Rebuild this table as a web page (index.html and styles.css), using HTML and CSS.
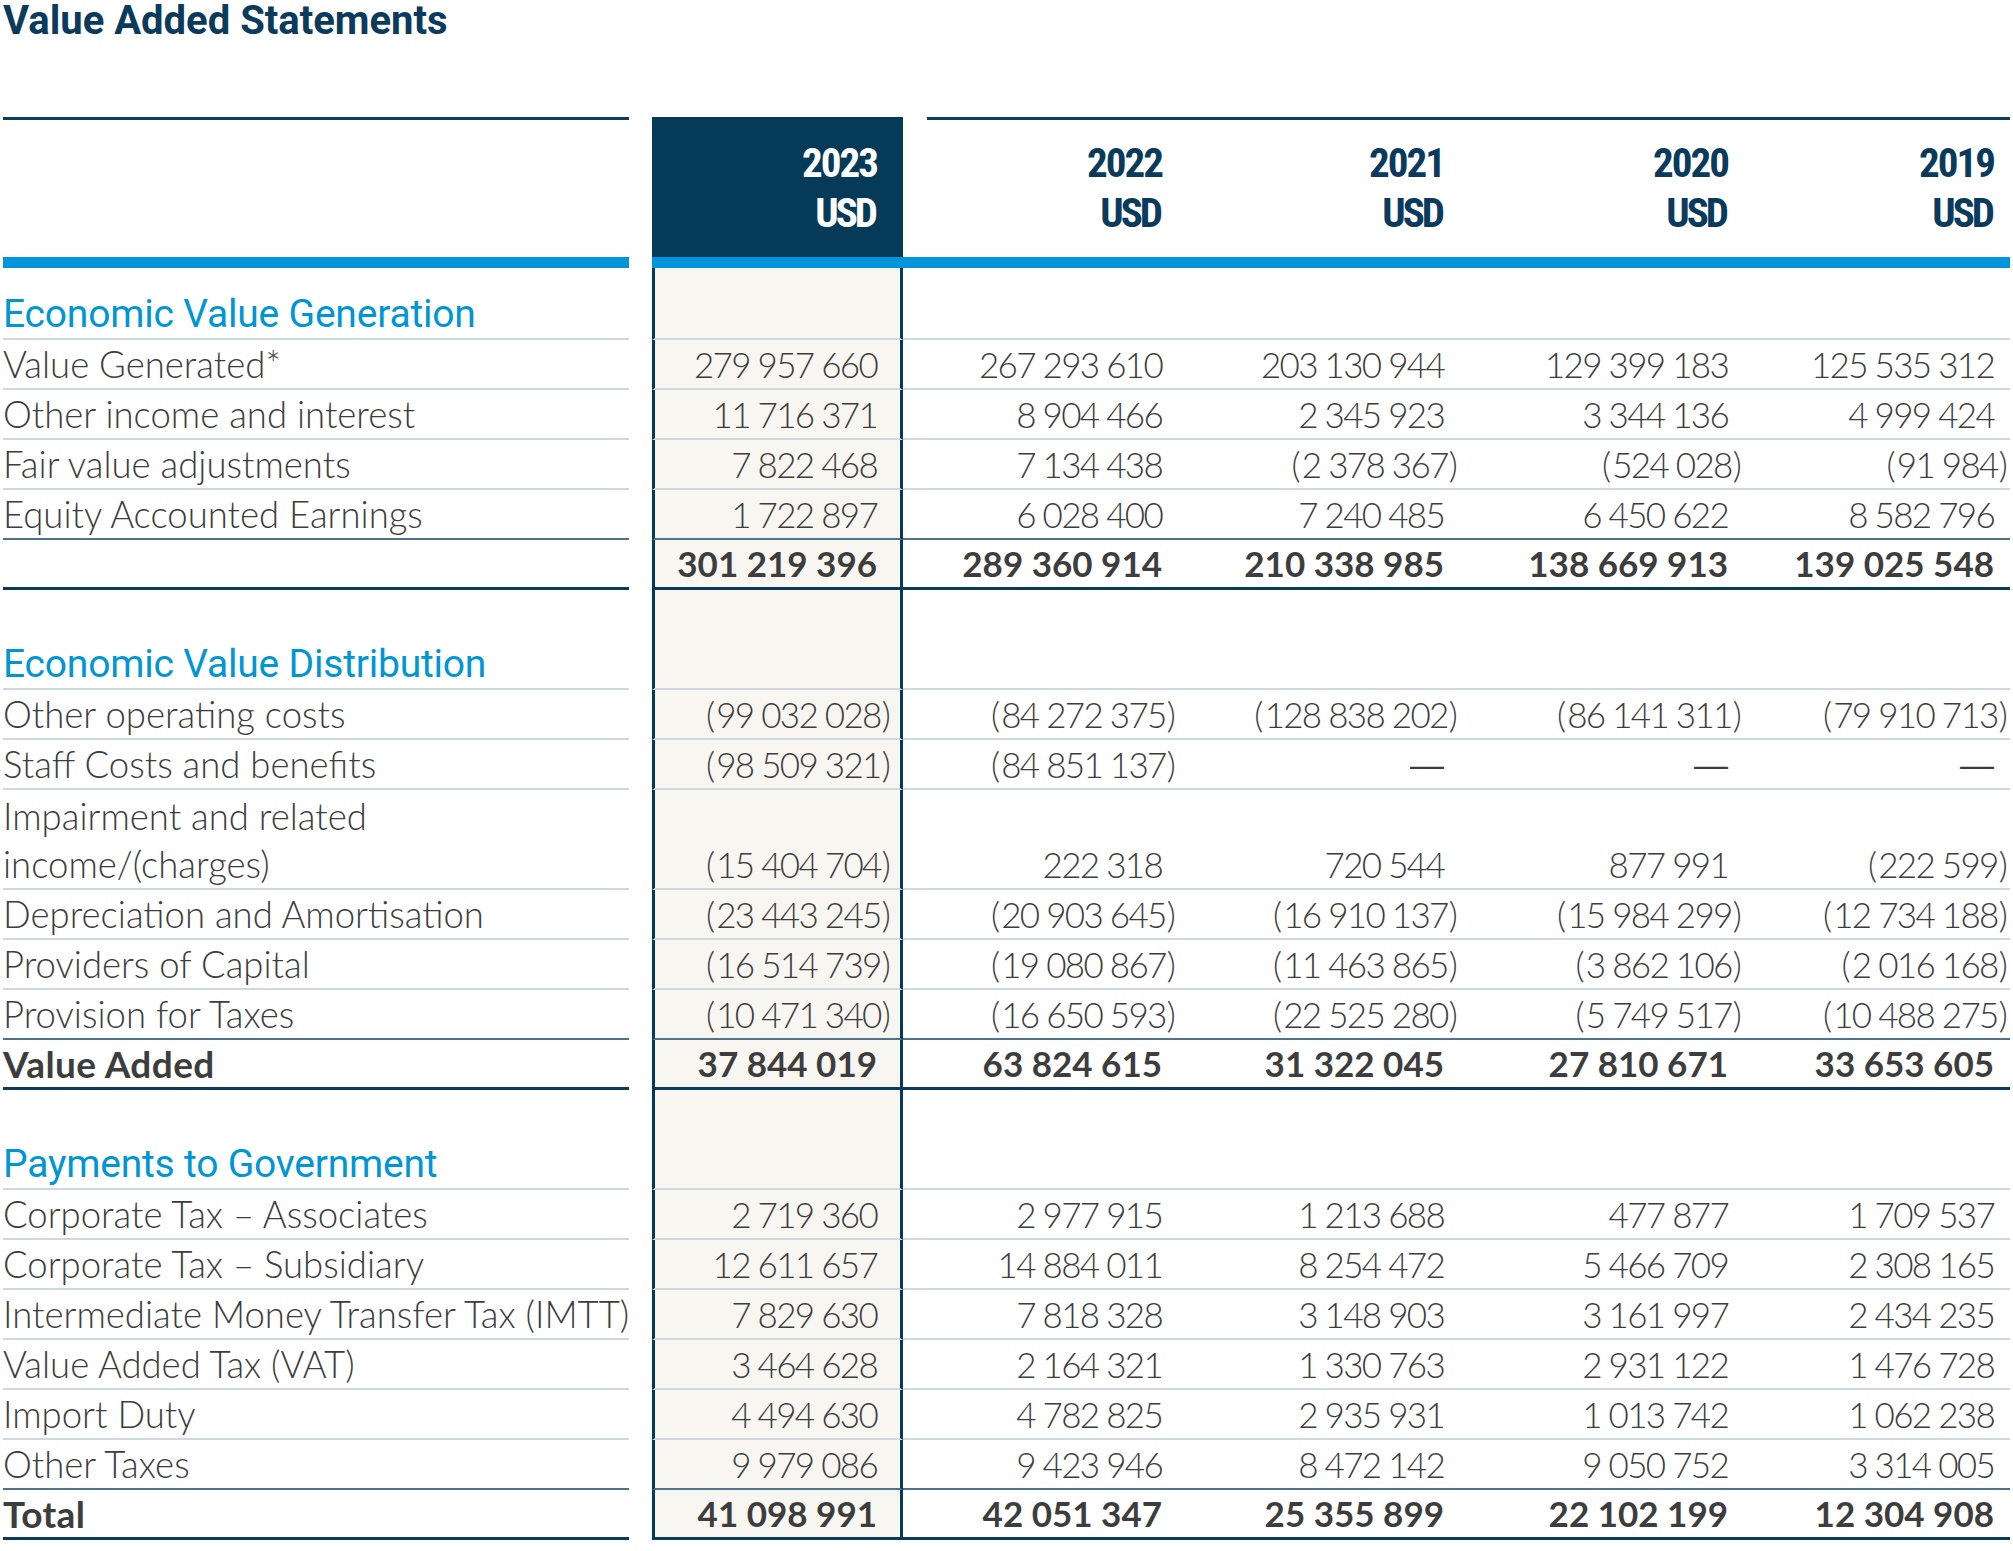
FILE: index.html
```html
<!DOCTYPE html>
<html lang="en">
<head>
<meta charset="utf-8">
<title>Value Added Statements</title>
<link rel="stylesheet" href="styles.css">
</head>
<body>
<h1 class="title">Value Added Statements</h1>

<div class="grid hdr">
  <div class="hlab"></div>
  <div class="h23">2023<br><span class="cur">USD</span></div>
  <div class="years">
    <div>2022<br><span class="cur">USD</span></div>
    <div>2021<br><span class="cur">USD</span></div>
    <div>2020<br><span class="cur">USD</span></div>
    <div>2019<br><span class="cur">USD</span></div>
  </div>
</div>
<div class="grid bar"><div class="b1"></div><div class="b2"></div></div>

<div class="grid row h1"><div class="c sec">Economic Value Generation</div><div class="c y23"></div><div class="c"></div><div class="c"></div><div class="c"></div><div class="c"></div></div>
<div class="grid row"><div class="c lab">Value Generated*</div><div class="c num y23">279 957 660</div><div class="c num">267 293 610</div><div class="c num">203 130 944</div><div class="c num">129 399 183</div><div class="c num last">125 535 312</div></div>
<div class="grid row"><div class="c lab">Other income and interest</div><div class="c num y23">11 716 371</div><div class="c num">8 904 466</div><div class="c num">2 345 923</div><div class="c num">3 344 136</div><div class="c num last">4 999 424</div></div>
<div class="grid row"><div class="c lab">Fair value adjustments</div><div class="c num y23">7 822 468</div><div class="c num">7 134 438</div><div class="c num"><span class="op">(</span>2 378 367<span class="cp">)</span></div><div class="c num"><span class="op">(</span>524 028<span class="cp">)</span></div><div class="c num last"><span class="op">(</span>91 984<span class="cp">)</span></div></div>
<div class="grid row pre"><div class="c lab">Equity Accounted Earnings</div><div class="c num y23">1 722 897</div><div class="c num">6 028 400</div><div class="c num">7 240 485</div><div class="c num">6 450 622</div><div class="c num last">8 582 796</div></div>
<div class="grid row tot"><div class="c lab"></div><div class="c num y23">301 219 396</div><div class="c num">289 360 914</div><div class="c num">210 338 985</div><div class="c num">138 669 913</div><div class="c num last">139 025 548</div></div>

<div class="grid row h2"><div class="c sec">Economic Value Distribution</div><div class="c y23"></div><div class="c"></div><div class="c"></div><div class="c"></div><div class="c"></div></div>
<div class="grid row"><div class="c lab">Other operating costs</div><div class="c num y23"><span class="op">(</span>99 032 028<span class="cp">)</span></div><div class="c num"><span class="op">(</span>84 272 375<span class="cp">)</span></div><div class="c num"><span class="op">(</span>128 838 202<span class="cp">)</span></div><div class="c num"><span class="op">(</span>86 141 311<span class="cp">)</span></div><div class="c num last"><span class="op">(</span>79 910 713<span class="cp">)</span></div></div>
<div class="grid row"><div class="c lab">Staff Costs and benefits</div><div class="c num y23"><span class="op">(</span>98 509 321<span class="cp">)</span></div><div class="c num"><span class="op">(</span>84 851 137<span class="cp">)</span></div><div class="c num"><span class="dash">—</span></div><div class="c num"><span class="dash">—</span></div><div class="c num last"><span class="dash">—</span></div></div>
<div class="grid row two"><div class="c lab">Impairment and related<br>income/(charges)</div><div class="c num y23"><span class="op">(</span>15 404 704<span class="cp">)</span></div><div class="c num">222 318</div><div class="c num">720 544</div><div class="c num">877 991</div><div class="c num last"><span class="op">(</span>222 599<span class="cp">)</span></div></div>
<div class="grid row"><div class="c lab">Depreciation and Amortisation</div><div class="c num y23"><span class="op">(</span>23 443 245<span class="cp">)</span></div><div class="c num"><span class="op">(</span>20 903 645<span class="cp">)</span></div><div class="c num"><span class="op">(</span>16 910 137<span class="cp">)</span></div><div class="c num"><span class="op">(</span>15 984 299<span class="cp">)</span></div><div class="c num last"><span class="op">(</span>12 734 188<span class="cp">)</span></div></div>
<div class="grid row"><div class="c lab">Providers of Capital</div><div class="c num y23"><span class="op">(</span>16 514 739<span class="cp">)</span></div><div class="c num"><span class="op">(</span>19 080 867<span class="cp">)</span></div><div class="c num"><span class="op">(</span>11 463 865<span class="cp">)</span></div><div class="c num"><span class="op">(</span>3 862 106<span class="cp">)</span></div><div class="c num last"><span class="op">(</span>2 016 168<span class="cp">)</span></div></div>
<div class="grid row pre"><div class="c lab">Provision for Taxes</div><div class="c num y23"><span class="op">(</span>10 471 340<span class="cp">)</span></div><div class="c num"><span class="op">(</span>16 650 593<span class="cp">)</span></div><div class="c num"><span class="op">(</span>22 525 280<span class="cp">)</span></div><div class="c num"><span class="op">(</span>5 749 517<span class="cp">)</span></div><div class="c num last"><span class="op">(</span>10 488 275<span class="cp">)</span></div></div>
<div class="grid row tot"><div class="c lab">Value Added</div><div class="c num y23">37 844 019</div><div class="c num">63 824 615</div><div class="c num">31 322 045</div><div class="c num">27 810 671</div><div class="c num last">33 653 605</div></div>

<div class="grid row h2"><div class="c sec">Payments to Government</div><div class="c y23"></div><div class="c"></div><div class="c"></div><div class="c"></div><div class="c"></div></div>
<div class="grid row"><div class="c lab">Corporate Tax – Associates</div><div class="c num y23">2 719 360</div><div class="c num">2 977 915</div><div class="c num">1 213 688</div><div class="c num">477 877</div><div class="c num last">1 709 537</div></div>
<div class="grid row"><div class="c lab">Corporate Tax – Subsidiary</div><div class="c num y23">12 611 657</div><div class="c num">14 884 011</div><div class="c num">8 254 472</div><div class="c num">5 466 709</div><div class="c num last">2 308 165</div></div>
<div class="grid row"><div class="c lab">Intermediate Money Transfer Tax (IMTT)</div><div class="c num y23">7 829 630</div><div class="c num">7 818 328</div><div class="c num">3 148 903</div><div class="c num">3 161 997</div><div class="c num last">2 434 235</div></div>
<div class="grid row"><div class="c lab">Value Added Tax (VAT)</div><div class="c num y23">3 464 628</div><div class="c num">2 164 321</div><div class="c num">1 330 763</div><div class="c num">2 931 122</div><div class="c num last">1 476 728</div></div>
<div class="grid row"><div class="c lab">Import Duty</div><div class="c num y23">4 494 630</div><div class="c num">4 782 825</div><div class="c num">2 935 931</div><div class="c num">1 013 742</div><div class="c num last">1 062 238</div></div>
<div class="grid row pre"><div class="c lab">Other Taxes</div><div class="c num y23">9 979 086</div><div class="c num">9 423 946</div><div class="c num">8 472 142</div><div class="c num">9 050 752</div><div class="c num last">3 314 005</div></div>
<div class="grid row tot"><div class="c lab">Total</div><div class="c num y23">41 098 991</div><div class="c num">42 051 347</div><div class="c num">25 355 899</div><div class="c num">22 102 199</div><div class="c num last">12 304 908</div></div>
</body>
</html>
```

FILE: styles.css
```css
* { box-sizing: border-box; }
html, body { margin: 0; background: #ffffff; }
body {
  padding: 0 0 0 3px;
  font-family: "Lato", "Open Sans", sans-serif;
  color: #3d3d3d;
}

.title {
  margin: 0 0 76px;
  padding-top: 1px;
  height: 41px;
  font: 700 40px/40px "Roboto", "Liberation Sans", sans-serif;
  color: #0a3a5c;
  letter-spacing: 0;
}

.grid {
  display: grid;
  grid-template-columns: 626px 23px 251px 285px 282px 284px 256px;
}

/* header */
.hdr { height: 140px; }
.hlab { border-top: 3px solid #0f3d5e; }
.h23 {
  grid-column: 3;
  background: #053a59;
  color: #ffffff;
  text-align: right;
  padding: 21px 26px 0 0;
  font: 700 41px/50px "Liberation Sans Narrow", "Roboto Condensed", "Roboto", sans-serif;
  letter-spacing: -2px;
}
.years {
  grid-column: 4 / span 4;
  margin-left: 24px;
  border-top: 3px solid #0f3d5e;
  display: grid;
  grid-template-columns: 261px 282px 284px 256px;
}
.years > div {
  text-align: right;
  padding: 18px 26px 0 0;
  color: #0a3a5c;
  font: 700 41px/50px "Liberation Sans Narrow", "Roboto Condensed", "Roboto", sans-serif;
  letter-spacing: -2px;
}
.years > div:last-child { padding-right: 16px; }
.cur { letter-spacing: -3px; margin-right: 2px; }

.bar { height: 11px; }
.b1 { background: #0095da; }
.b2 { grid-column: 3 / span 5; background: #0095da; }

/* body rows */
.row { height: 50px; }
.row > .c {
  border-bottom: 2px solid #cfd8e1;
  display: flex;
  align-items: flex-end;
  line-height: 48px;
  font-size: 36.5px;
  font-weight: 300;
  white-space: nowrap;
}
.row.h1 { height: 72px; }
.row.h2 { height: 100px; }
.row.two { height: 100px; }

.lab { justify-content: flex-start; }
.row > .c.num {
  justify-content: flex-end;
  padding-right: 26px;
  font-size: 35px;
  letter-spacing: -1.7px;
}
.row > .c.num.last { padding-right: 16px; }
.op { margin-right: 3px; }
.cp { margin-left: 1px; margin-right: -12px; }
.dash {
  font-family: "Liberation Sans", sans-serif;
  font-size: 34px;
  letter-spacing: 0;
}

.y23 {
  grid-column: 3;
  background: #f8f6f1;
  border-left: 3px solid #073a5a;
  border-right: 3px solid #073a5a;
}
.row > .c.num.y23 { padding-right: 23px; }

.row > .c.sec {
  font-family: "Roboto", "Liberation Sans", sans-serif;
  font-weight: 400;
  font-size: 39px;
  color: #0096d6;
  letter-spacing: -0.2px;
}

.row.pre > .c { border-bottom-color: #50738c; }
.row.tot > .c {
  border-bottom: 3px solid #0b3a5a;
  font-weight: 700;
  line-height: 47px;
}
.row.tot > .c.lab { font-size: 37px; letter-spacing: 0.4px; }
.row.tot > .c.num { letter-spacing: 0; font-size: 35px; }
.row.tot > .c.y23 { border-bottom-color: #0b3a5a; }
```
